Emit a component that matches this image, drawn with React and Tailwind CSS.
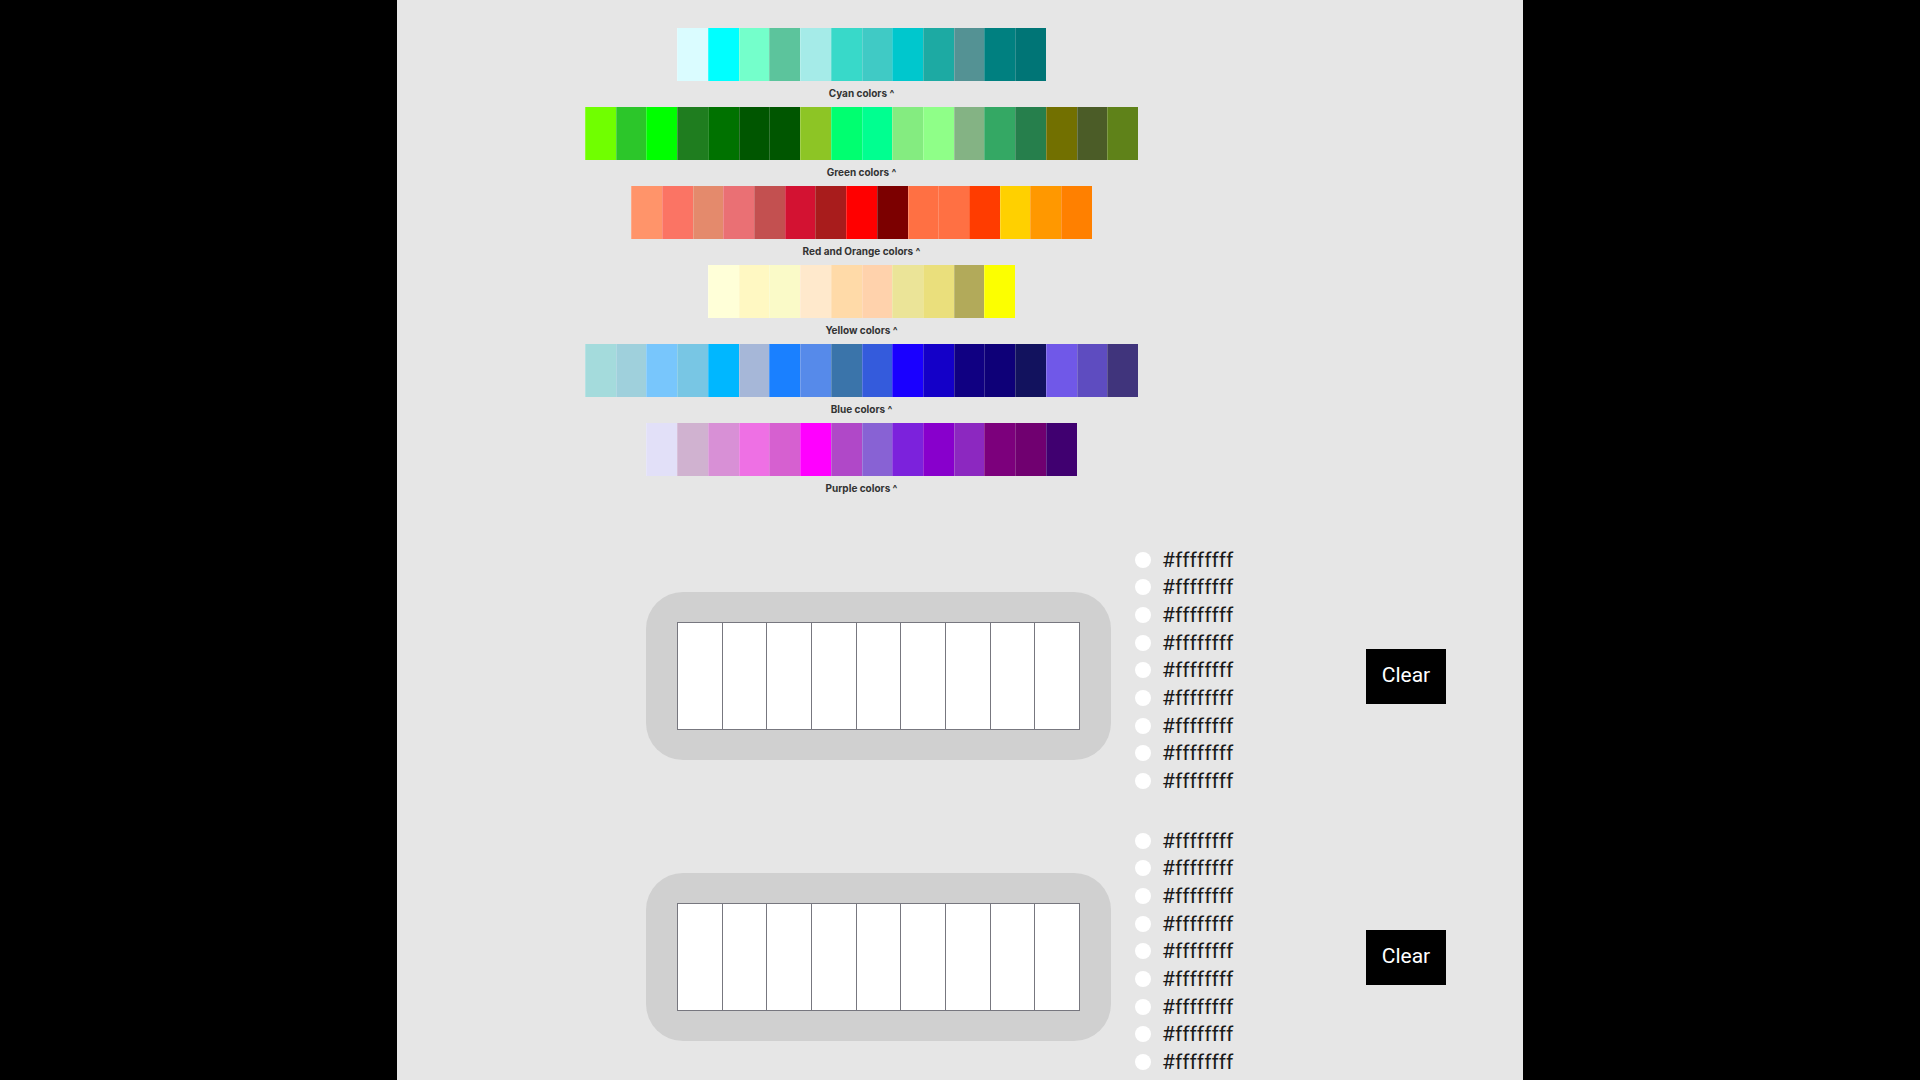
const PALETTES = [
  {
    name: 'Cyan colors ^',
    colors: ['#dafcff', '#00ffff', '#74ffcb', '#5cc49c', '#a5ebe8', '#38d9c9', '#40cac5', '#00c7cd', '#1daaa3', '#549294', '#008080', '#007576'],
  },
  {
    name: 'Green colors ^',
    colors: ['#70ff00', '#2cc62a', '#00ff00', '#1f7d1f', '#007200', '#005600', '#005600', '#8dc525', '#00ff70', '#00ff90', '#84ec80', '#8fff88', '#84b384', '#34a864', '#267f4c', '#727000', '#4b5c27', '#5f8219'],
  },
  {
    name: 'Red and Orange colors ^',
    colors: ['#ff946a', '#fb7464', '#e48a6c', '#ea7074', '#c35050', '#d31232', '#a81c1c', '#ff0000', '#7c0000', '#ff7043', '#ff7043', '#ff3c00', '#ffd000', '#ff9800', '#ff8000'],
  },
  {
    name: 'Yellow colors ^',
    colors: ['#ffffd8', '#fff8c2', '#fafac8', '#ffe9cc', '#ffdaa8', '#ffd2ac', '#ebe498', '#eadf7c', '#b2aa5a', '#fcff00'],
  },
  {
    name: 'Blue colors ^',
    colors: ['#a4dbdc', '#9fd0dc', '#78c6fc', '#78c6e4', '#00b7ff', '#a6b7d8', '#1a80ff', '#568aea', '#3a74aa', '#345bdc', '#1a00ff', '#1400c8', '#100082', '#0e0078', '#12125e', '#7058e8', '#5e4cc0', '#40347c'],
  },
  {
    name: 'Purple colors ^',
    colors: ['#e2e0f8', '#d0b2d0', '#d890d6', '#ee70e4', '#d660d0', '#ff00ff', '#b048c8', '#8862d4', '#7c22dc', '#8800cc', '#8c28c0', '#7c007c', '#700070', '#400070'],
  },
];

const EMPTY_STRIP = Array(9).fill('#ffffffff');

function Palette({ name, colors }) {
  return (
    <figure className="flex w-full flex-col items-center">
      <div className="flex h-[53px] w-full justify-center">
        {colors.map((color, i) => (
          <button
            key={i}
            type="button"
            aria-label={color}
            className="h-full w-1/18 border-l border-white/20"
            style={{ backgroundColor: color }}
          />
        ))}
      </div>
      <figcaption className="h-[26px] text-[10px] leading-6 font-bold text-[#333333]">{name}</figcaption>
    </figure>
  );
}

function Strip({ values }) {
  return (
    <section className="flex items-center">
      <div className="rounded-[37px] bg-[#d0d0d0] px-[31px] py-[30px]">
        <div className="flex h-[108px] w-[403px] border-t border-r border-b border-[#77777f]">
          {values.map((value, i) => (
            <button
              key={i}
              type="button"
              aria-label={`Slot ${i + 1}`}
              className="flex-1 border-l border-[#77777f]"
              style={{ backgroundColor: value }}
            />
          ))}
        </div>
      </div>
      <ul className="ml-6 grid h-[260px] auto-rows-fr pb-[11px]">
        {values.map((value, i) => (
          <li key={i} className="flex items-center gap-[11px] text-[21px] leading-6 text-[#1a1a1a]">
            <span className="size-4 rounded-full" style={{ backgroundColor: value }} />
            {value}
          </li>
        ))}
      </ul>
      <button type="button" className="mr-[77px] ml-auto h-[55px] w-20 bg-black text-[21px] text-white">
        Clear
      </button>
    </section>
  );
}

export default function App() {
  return (
    <div className="h-screen overflow-hidden bg-black font-['Roboto','Liberation_Sans',sans-serif]">
      <main className="mx-auto min-h-screen w-full max-w-[1126px] bg-[#e6e6e6] pt-7">
        <div className="ml-[188px] w-[553px] font-['Inter','Liberation_Sans',sans-serif]">
          {PALETTES.map((palette) => (
            <Palette key={palette.name} {...palette} />
          ))}
        </div>
        <div className="mt-11 ml-[249px] flex flex-col gap-[21px]">
          <Strip values={EMPTY_STRIP} />
          <Strip values={EMPTY_STRIP} />
        </div>
      </main>
    </div>
  );
}
